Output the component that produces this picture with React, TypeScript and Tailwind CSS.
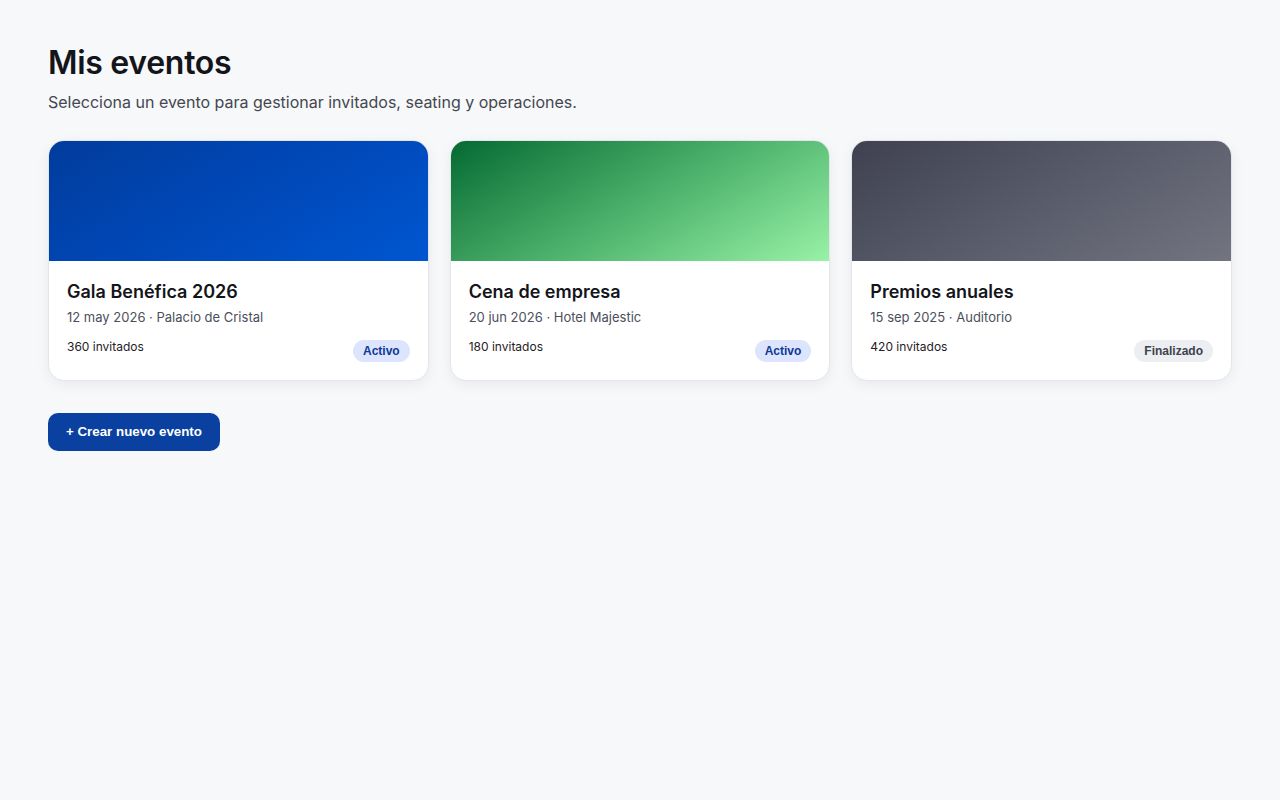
const events = [
  {
    name: "Gala Benéfica 2026",
    meta: "12 may 2026 · Palacio de Cristal",
    guests: "360 invitados",
    status: "Activo",
    cover: "bg-[linear-gradient(150deg,#013c9c_0%,#0048b8_50%,#0056d0_100%)]",
  },
  {
    name: "Cena de empresa",
    meta: "20 jun 2026 · Hotel Majestic",
    guests: "180 invitados",
    status: "Activo",
    cover: "bg-[linear-gradient(150deg,#056a32_0%,#4bb06a_50%,#98f2a6_100%)]",
  },
  {
    name: "Premios anuales",
    meta: "15 sep 2025 · Auditorio",
    guests: "420 invitados",
    status: "Finalizado",
    cover: "bg-[linear-gradient(150deg,#3f4150_0%,#585b6a_50%,#737480_100%)]",
  },
];

export default function App() {
  return (
    <div className="min-h-screen w-full bg-[#f7f8fa] px-12 pt-[43px] font-['Inter',sans-serif] text-[#111]">
      <h1 className="text-[32px] font-semibold leading-[40px] tracking-[-0.3px] text-[#14151a]">
        Mis eventos
      </h1>
      <p className="mt-[7px] text-[16px] leading-6 text-[#44474f]">
        Selecciona un evento para gestionar invitados, seating y operaciones.
      </p>

      {/* event cards */}
      <div className="mt-[26px] grid grid-cols-3 gap-[21px]">
        {events.map((e) => (
          <div
            key={e.name}
            className="overflow-hidden rounded-2xl border border-[#e3e5ea] bg-white shadow-[0_4px_14px_rgba(15,23,42,0.06)]"
          >
            <div className={`h-[120px] ${e.cover}`} />
            <div className="px-[18px] pt-[19px] pb-[18px]">
              <p className="text-[18px] font-semibold leading-6 text-[#14151a]">{e.name}</p>
              <p className="mt-[3px] text-[13px] leading-5 text-[#4b4f5c]">{e.meta}</p>
              <div className="mt-3 flex items-start justify-between">
                <p className="text-[12px] leading-4 text-[#1f2126]">{e.guests}</p>
                <span
                  className={`mt-px rounded-full px-[10px] font-['Liberation_Sans',sans-serif] text-[12px] font-bold leading-[22px] ${
                    e.status === "Activo"
                      ? "bg-[#dde4fd] text-[#0c3a96]"
                      : "bg-[#eceef1] text-[#3e424c]"
                  }`}
                >
                  {e.status}
                </span>
              </div>
            </div>
          </div>
        ))}
      </div>

      <button className="mt-[32px] h-[38px] rounded-[10px] bg-[#0a40a0] px-[18px] font-['Liberation_Sans',sans-serif] text-[13.33px] font-bold text-white">
        + Crear nuevo evento
      </button>
    </div>
  );
}
